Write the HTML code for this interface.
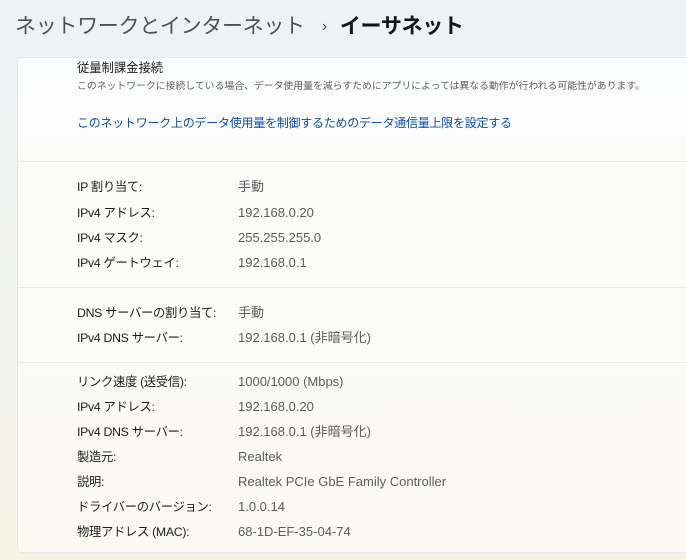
<!DOCTYPE html>
<html><head><meta charset="utf-8"><style>
body{margin:0;width:686px;height:560px;overflow:hidden;font-family:"Liberation Sans","Noto Sans CJK JP",sans-serif;background:linear-gradient(180deg,#eef2f5 0%,#f2f3ee 60%,#f4f3e2 100%);position:relative}
.h{position:absolute;top:10px;left:15px;font-size:21px;line-height:34px;color:#505050;white-space:nowrap;letter-spacing:-0.3px}
.h b{color:#141414;font-weight:600}
.h .c{font-size:16px;color:#555;margin:0 13px 0 17px;position:relative;top:-2px}
.card{position:absolute;left:17px;top:57px;width:680px;height:494px;background:linear-gradient(180deg,#fbfcfc 0%,#fbfbf8 50%,#fbfaf3 100%);border-radius:4px;border:1px solid #e6e8e6}
.t{position:absolute;left:77px;white-space:nowrap}
.hr{position:absolute;left:18px;width:668px;height:1px;background:#e8ece8}
.row{position:absolute;left:77px;display:flex;align-items:baseline;white-space:nowrap;height:18px;line-height:18px}
.row .l{width:161px;font-size:12.3px;color:#1c1c1c;letter-spacing:-0.3px}
.row .v{font-size:13px;color:#5c5c5c}
</style></head><body>
<div class="h">ネットワークとインターネット<span class="c">›</span><b>イーサネット</b></div>
<div class="card"></div>
<div class="t" style="top:58px;font-size:12.3px;color:#1c1c1c">従量制課金接続</div>
<div class="t" style="top:78px;font-size:9.85px;color:#606060">このネットワークに接続している場合、データ使用量を減らすためにアプリによっては異なる動作が行われる可能性があります。</div>
<div class="t" style="top:114px;font-size:12px;color:#0a4fa8;letter-spacing:-0.25px">このネットワーク上のデータ使用量を制御するためのデータ通信量上限を設定する</div>
<div class="hr" style="top:161px"></div>
<div class="hr" style="top:287px"></div>
<div class="hr" style="top:362px"></div>
<div class="row" style="top:178px"><span class="l">IP 割り当て:</span><span class="v">手動</span></div>
<div class="row" style="top:204px"><span class="l">IPv4 アドレス:</span><span class="v">192.168.0.20</span></div>
<div class="row" style="top:229px"><span class="l">IPv4 マスク:</span><span class="v">255.255.255.0</span></div>
<div class="row" style="top:254px"><span class="l">IPv4 ゲートウェイ:</span><span class="v">192.168.0.1</span></div>
<div class="row" style="top:304px"><span class="l">DNS サーバーの割り当て:</span><span class="v">手動</span></div>
<div class="row" style="top:329px"><span class="l">IPv4 DNS サーバー:</span><span class="v">192.168.0.1 (非暗号化)</span></div>
<div class="row" style="top:373px"><span class="l">リンク速度 (送受信):</span><span class="v">1000/1000 (Mbps)</span></div>
<div class="row" style="top:398px"><span class="l">IPv4 アドレス:</span><span class="v">192.168.0.20</span></div>
<div class="row" style="top:423px"><span class="l">IPv4 DNS サーバー:</span><span class="v">192.168.0.1 (非暗号化)</span></div>
<div class="row" style="top:448px"><span class="l">製造元:</span><span class="v">Realtek</span></div>
<div class="row" style="top:473px"><span class="l">説明:</span><span class="v">Realtek PCIe GbE Family Controller</span></div>
<div class="row" style="top:498px"><span class="l">ドライバーのバージョン:</span><span class="v">1.0.0.14</span></div>
<div class="row" style="top:523px"><span class="l">物理アドレス (MAC):</span><span class="v">68-1D-EF-35-04-74</span></div>
</body></html>
